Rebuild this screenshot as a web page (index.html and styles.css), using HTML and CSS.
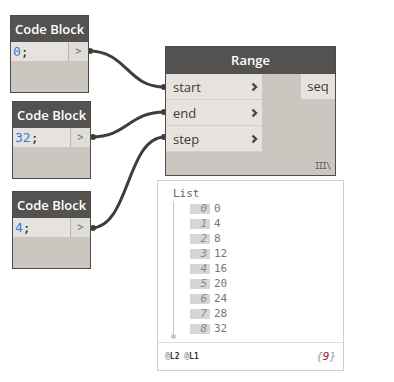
FILE: index.html
```html
<!DOCTYPE html>
<html lang="en">
<head>
  <meta charset="UTF-8">
  <title>Range Graph</title>
  <link rel="stylesheet" href="styles.css">
</head>
<body>
  <div class="canvas">

    <!-- wires -->
    <svg class="wires" width="394" height="382" viewBox="0 0 394 382">
      <path d="M88 51 C 128 51, 126 87, 165 87" />
      <path d="M91 137 C 128 137, 128 112, 165 112" />
      <path d="M91 228 C 130 228, 126 137, 165 137" />
      <circle cx="90" cy="51" r="3" />
      <circle cx="93" cy="137" r="3" />
      <circle cx="93" cy="228" r="3" />
      <circle cx="164" cy="87" r="3" />
      <circle cx="164" cy="112" r="3" />
      <circle cx="164" cy="137" r="3" />
    </svg>

    <!-- Code Block nodes -->
    <div class="node code-node cb-1">
      <div class="node-header">Code Block</div>
      <div class="code-row">
        <div class="code"><span class="num">0</span>;</div>
        <div class="out-port">&gt;</div>
      </div>
    </div>

    <div class="node code-node cb-2">
      <div class="node-header">Code Block</div>
      <div class="code-row">
        <div class="code"><span class="num">32</span>;</div>
        <div class="out-port">&gt;</div>
      </div>
    </div>

    <div class="node code-node cb-3">
      <div class="node-header">Code Block</div>
      <div class="code-row">
        <div class="code"><span class="num">4</span>;</div>
        <div class="out-port">&gt;</div>
      </div>
    </div>

    <!-- Range node -->
    <div class="node range-node">
      <div class="node-header center">Range</div>
      <div class="range-body">
        <div class="inputs">
          <div class="in-port"><span>start</span><svg class="chev" width="7" height="10" viewBox="0 0 7 10"><polyline points="1.5,1.5 5,5 1.5,8.5" /></svg></div>
          <div class="in-port"><span>end</span><svg class="chev" width="7" height="10" viewBox="0 0 7 10"><polyline points="1.5,1.5 5,5 1.5,8.5" /></svg></div>
          <div class="in-port"><span>step</span><svg class="chev" width="7" height="10" viewBox="0 0 7 10"><polyline points="1.5,1.5 5,5 1.5,8.5" /></svg></div>
        </div>
        <div class="outputs">
          <div class="seq-port">seq</div>
        </div>
      </div>
      <div class="lacing">III\</div>
    </div>

    <!-- Preview bubble -->
    <div class="preview">
      <div class="preview-body">
        <div class="list-title">List</div>
        <div class="list-items">
          <div class="item"><span class="idx">0</span><span class="val">0</span></div>
          <div class="item"><span class="idx">1</span><span class="val">4</span></div>
          <div class="item"><span class="idx">2</span><span class="val">8</span></div>
          <div class="item"><span class="idx">3</span><span class="val">12</span></div>
          <div class="item"><span class="idx">4</span><span class="val">16</span></div>
          <div class="item"><span class="idx">5</span><span class="val">20</span></div>
          <div class="item"><span class="idx">6</span><span class="val">24</span></div>
          <div class="item"><span class="idx">7</span><span class="val">28</span></div>
          <div class="item"><span class="idx">8</span><span class="val">32</span></div>
        </div>
      </div>
      <div class="preview-footer">
        <div class="levels"><span class="at">@</span>L2 <span class="at">@</span>L1</div>
        <div class="count">{<span class="count-num">9</span>}</div>
      </div>
    </div>

  </div>
</body>
</html>
```

FILE: styles.css
```css
body {
  margin: 0;
  background-color: #fff;
  font-family: "Open Sans", "Noto Sans", sans-serif;
}

.canvas {
  position: relative;
  width: 394px;
  height: 382px;
  overflow: hidden;
}

.wires {
  position: absolute;
  top: 0;
  left: 0;
}

.wires path {
  fill: none;
  stroke: #3d3d3d;
  stroke-width: 3;
}

.wires circle {
  fill: #3d3d3d;
}

/* Nodes */
.node {
  position: absolute;
  border: 1px solid #4e4c4a;
  background-color: #cbc6bf;
  display: flex;
  flex-direction: column;
  box-sizing: border-box;
}

.node-header {
  background-color: #545250;
  color: #fff;
  font-size: 13px;
  font-weight: 600;
  height: 26px;
  line-height: 26px;
  padding-left: 4px;
}

.node-header.center {
  text-align: center;
  padding-left: 0;
}

.code-node {
  width: 79px;
  height: 78px;
}

.cb-1 { left: 10px; top: 15px; }
.cb-2 { left: 12px; top: 101px; }
.cb-3 { left: 12px; top: 191px; }

.code-row {
  display: flex;
  height: 19px;
  background-color: #e6e3df;
}

.code {
  flex: 1;
  font-family: "DejaVu Sans Mono", monospace;
  font-size: 13px;
  line-height: 19px;
  padding-left: 2px;
  color: #222;
}

.num {
  color: #2f7fd8;
}

.out-port {
  width: 19px;
  border-left: 1px solid #b9b5ae;
  background-color: #e0ddd8;
  color: #555;
  font-size: 11px;
  line-height: 18px;
  text-align: center;
}

/* Range */
.range-node {
  left: 165px;
  top: 46px;
  width: 171px;
  height: 130px;
}

.node-header.center {
  height: 27px;
  line-height: 27px;
}

.range-body {
  display: flex;
  justify-content: space-between;
}

.inputs {
  width: 96px;
  display: flex;
  flex-direction: column;
}

.in-port {
  height: 25px;
  display: flex;
  align-items: center;
  justify-content: space-between;
  padding: 0 4px 0 7px;
  background-color: #e6e3df;
  border-bottom: 1px solid #d2cec8;
  font-size: 13px;
  color: #3a3a3a;
}

.chev polyline {
  fill: none;
  stroke: #444;
  stroke-width: 2.4;
}

.seq-port {
  width: 34px;
  height: 25px;
  line-height: 25px;
  background-color: #e6e3df;
  font-size: 13px;
  color: #3a3a3a;
  text-align: center;
}

.lacing {
  margin-top: auto;
  align-self: flex-end;
  font-family: "DejaVu Sans Mono", monospace;
  font-size: 8px;
  color: #555;
  padding: 0 5px 4px 0;
  letter-spacing: -1px;
}

/* Preview */
.preview {
  position: absolute;
  left: 157px;
  top: 180px;
  width: 187px;
  height: 191px;
  border: 1px solid #cfcfcf;
  box-sizing: border-box;
  background-color: #fff;
  display: flex;
  flex-direction: column;
  font-family: "DejaVu Sans Mono", monospace;
}

.preview-body {
  flex: 1;
  padding: 6px 0 0 15px;
}

.list-title {
  font-size: 11px;
  line-height: 14px;
  color: #666;
}

.list-items {
  position: relative;
  border-left: 1px solid #c8c8c8;
  padding-left: 16px;
  padding-bottom: 2px;
}

.list-items::after {
  content: "";
  position: absolute;
  left: -3px;
  bottom: -1px;
  width: 5px;
  height: 5px;
  border-radius: 50%;
  background-color: #c8c8c8;
}

.item {
  height: 15px;
  display: flex;
  align-items: center;
  font-size: 11px;
  color: #777;
}

.idx {
  width: 20px;
  height: 10px;
  line-height: 10px;
  background-color: #d6d6d6;
  color: #8a8a8a;
  font-style: italic;
  text-align: right;
  padding-right: 3px;
  box-sizing: border-box;
}

.val {
  margin-left: 4px;
}

.preview-footer {
  height: 27px;
  border-top: 1px solid #dedede;
  display: flex;
  align-items: center;
  justify-content: space-between;
  padding: 0 7px 0 7px;
}

.levels {
  font-size: 8px;
  font-weight: bold;
  color: #333;
}

.levels .at {
  color: #999;
}

.count {
  font-size: 11px;
  font-style: italic;
  color: #999;
}

.count-num {
  color: #a0201c;
}
```
